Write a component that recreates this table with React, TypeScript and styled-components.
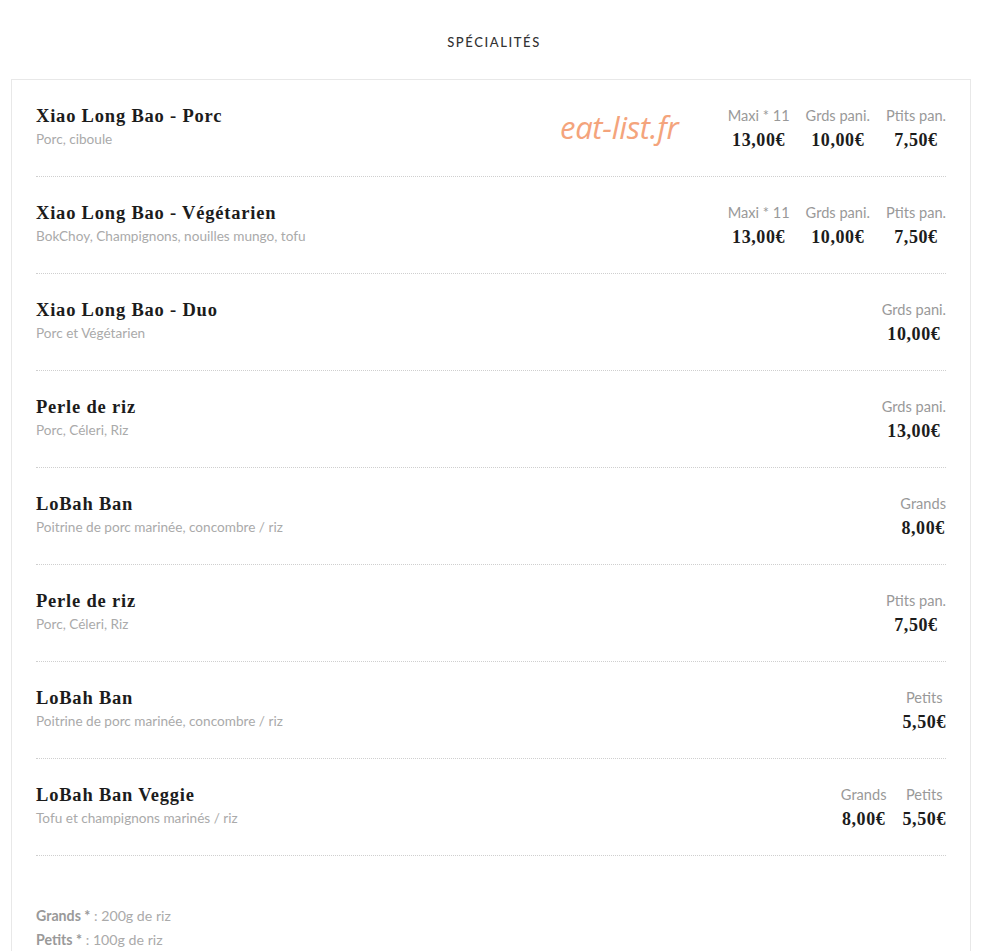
import { styled, createGlobalStyle } from 'styled-components';

const GlobalStyle = createGlobalStyle`
    body {
        margin: 0;
        background: #ffffff;
        font-family: 'Lato', 'Noto Sans', sans-serif;
    }
`;

const Page = styled.div`
    padding-top: 32px;
`;

const Heading = styled.h2`
    margin: 0 0 27px;
    text-align: center;
    font-family: 'Lato', sans-serif;
    font-size: 13px;
    font-weight: 500;
    line-height: 20px;
    letter-spacing: 1.6px;
    color: #333;
`;

const Card = styled.div`
    position: relative;
    width: 960px;
    margin-left: 11px;
    box-sizing: border-box;
    border: 1px solid #e8e8e8;
    border-bottom: none;
    padding: 0 24px 40px;
`;

const Row = styled.div`
    display: flex;
    justify-content: space-between;
    align-items: flex-start;
    height: 97px;
    box-sizing: border-box;
    padding-top: 26px;
    border-bottom: 1px dotted #cfcfcf;
`;

const Info = styled.div`
    display: flex;
    flex-direction: column;
    gap: 3px;
`;

const Title = styled.div`
    font-family: 'Liberation Serif', serif;
    font-weight: 700;
    font-size: 18.5px;
    line-height: 20px;
    letter-spacing: 0.8px;
    color: #1c1c1c;
`;

const Desc = styled.div`
    font-size: 13.6px;
    line-height: 20px;
    color: #aaa;
`;

const Prices = styled.div`
    display: flex;
    gap: 16px;
`;

const PriceCol = styled.div`
    display: flex;
    flex-direction: column;
    align-items: center;
    gap: 4px;
`;

const Label = styled.div`
    font-size: 14.6px;
    line-height: 20px;
    color: #999;
`;

const Amount = styled.div`
    font-family: 'Liberation Serif', serif;
    font-weight: 700;
    font-size: 18px;
    line-height: 20px;
    letter-spacing: 0.6px;
    color: #1c1c1c;
`;

const Watermark = styled.div`
    position: absolute;
    left: 548px;
    top: 26px;
    font-family: 'Open Sans', sans-serif;
    font-style: italic;
    font-size: 31px;
    color: #f4a47c;
    letter-spacing: -0.3px;
`;

const Notes = styled.div`
    padding-top: 50px;
    display: flex;
    flex-direction: column;
    gap: 4px;
`;

const Note = styled.div`
    font-size: 14.2px;
    line-height: 20px;
    color: #aaa;

    b {
        color: #999;
        font-weight: 700;
    }
`;

type Item = {
    name: string;
    desc: string;
    prices: [string, string][];
};

const items: Item[] = [
    {
        name: 'Xiao Long Bao - Porc',
        desc: 'Porc, ciboule',
        prices: [
            ['Maxi * 11', '13,00€'],
            ['Grds pani.', '10,00€'],
            ['Ptits pan.', '7,50€'],
        ],
    },
    {
        name: 'Xiao Long Bao - Végétarien',
        desc: 'BokChoy, Champignons, nouilles mungo, tofu',
        prices: [
            ['Maxi * 11', '13,00€'],
            ['Grds pani.', '10,00€'],
            ['Ptits pan.', '7,50€'],
        ],
    },
    { name: 'Xiao Long Bao - Duo', desc: 'Porc et Végétarien', prices: [['Grds pani.', '10,00€']] },
    { name: 'Perle de riz', desc: 'Porc, Céleri, Riz', prices: [['Grds pani.', '13,00€']] },
    { name: 'LoBah Ban', desc: 'Poitrine de porc marinée, concombre / riz', prices: [['Grands', '8,00€']] },
    { name: 'Perle de riz', desc: 'Porc, Céleri, Riz', prices: [['Ptits pan.', '7,50€']] },
    { name: 'LoBah Ban', desc: 'Poitrine de porc marinée, concombre / riz', prices: [['Petits', '5,50€']] },
    {
        name: 'LoBah Ban Veggie',
        desc: 'Tofu et champignons marinés / riz',
        prices: [
            ['Grands', '8,00€'],
            ['Petits', '5,50€'],
        ],
    },
];

export default function App() {
    return (
        <Page>
            <GlobalStyle />
            <Heading>SPÉCIALITÉS</Heading>
            <Card>
                <Watermark>eat-list.fr</Watermark>
                {items.map((item, i) => (
                    <Row key={i}>
                        <Info>
                            <Title>{item.name}</Title>
                            <Desc>{item.desc}</Desc>
                        </Info>
                        <Prices>
                            {item.prices.map(([label, amount]) => (
                                <PriceCol key={label}>
                                    <Label>{label}</Label>
                                    <Amount>{amount}</Amount>
                                </PriceCol>
                            ))}
                        </Prices>
                    </Row>
                ))}
                <Notes>
                    <Note>
                        <b>Grands *</b> : 200g de riz
                    </Note>
                    <Note>
                        <b>Petits *</b> : 100g de riz
                    </Note>
                </Notes>
            </Card>
        </Page>
    );
}
